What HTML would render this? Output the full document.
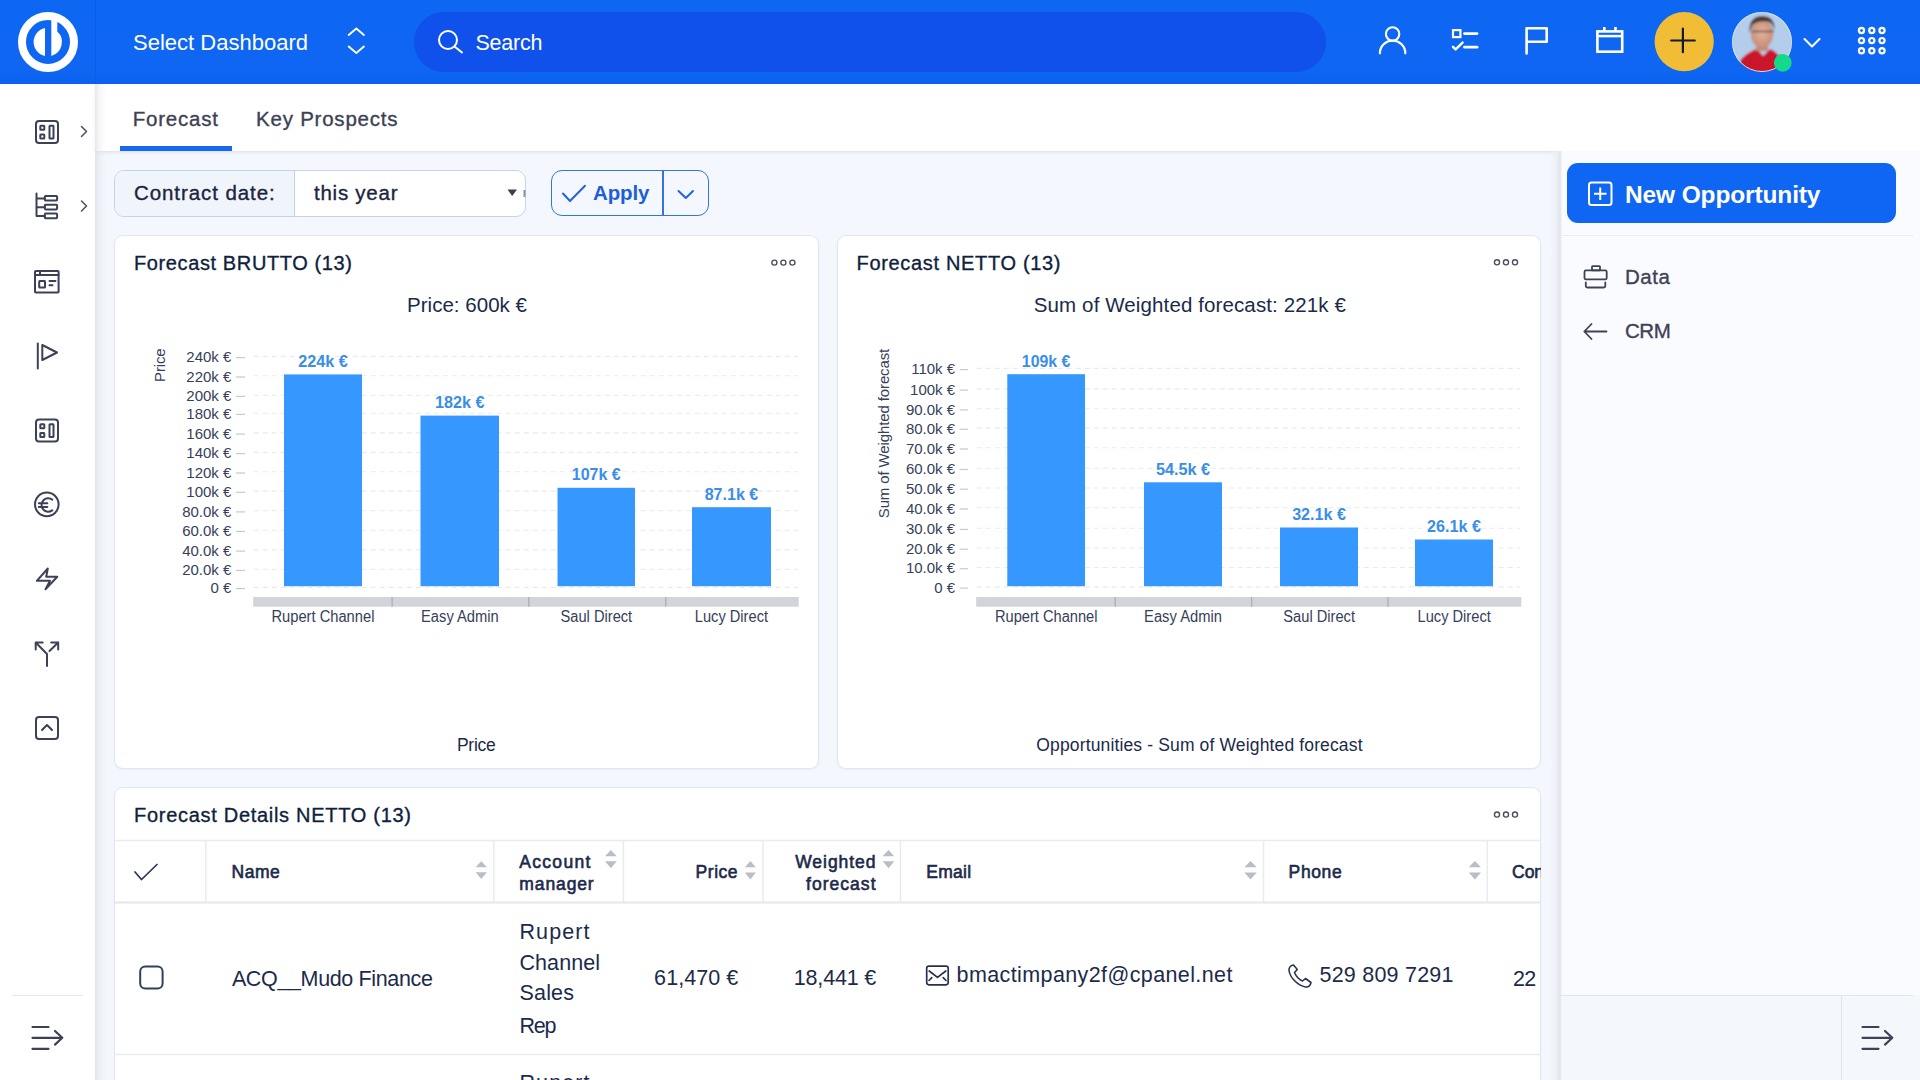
<!DOCTYPE html>
<html><head><meta charset="utf-8">
<style>
html,body{margin:0;padding:0;width:1920px;height:1080px;overflow:hidden;background:#f4f7fd;font-family:"Liberation Sans",sans-serif;}
.a{position:absolute;box-sizing:border-box;}
#hdr{left:0;top:0;width:1920px;height:84px;background:linear-gradient(#0e67f2 0,#0e66f2 70px,#0a62f1 84px);}
#side{left:0;top:84px;width:95px;height:996px;background:#fff;}
#sideline{left:95px;top:84px;width:11px;height:996px;background:linear-gradient(to right,rgba(200,205,212,0.45),rgba(215,220,228,0.25) 40%,rgba(244,247,253,0));}
#tabs{left:95px;top:84px;width:1825px;height:68px;background:#fff;border-bottom:1px solid #e3e7ed;box-shadow:0 1px 3px rgba(40,60,100,0.08);}
#rside{left:1560px;top:151px;width:360px;height:929px;background:#fafbfe;}
#rsideshadow{left:1550px;top:151px;width:12px;height:929px;background:linear-gradient(to right,rgba(244,247,253,0),#eceff5 55%,#e3e6ed 80%,#e6e9ef 90%,#f7fafc);}
#rsidebot{left:1560px;top:995px;width:360px;height:85px;background:#f4f7fc;}
.card{background:#fff;border:1px solid #e2e7ef;border-radius:9px;box-shadow:0 1px 2px rgba(30,50,90,0.05);}
svg{position:absolute;left:0;top:0;}
</style></head>
<body>
<div class="a" id="hdr"></div>
<div class="a" id="side"></div>
<div class="a" id="tabs"></div>
<div class="a" id="rside"></div>
<div class="a" id="rsidebot"></div>
<div class="a" id="rsideshadow"></div>
<div class="a" id="sideline"></div>

<!-- filter -->
<div class="a" style="left:114px;top:169.5px;width:412px;height:47px;border:1px solid #c6d3e7;border-radius:10px;background:#fff;overflow:hidden;">
  <div class="a" style="left:0;top:0;width:180px;height:45px;background:#f0f4fb;border-right:1px solid #c6d3e7;"></div>
</div>
<div class="a" style="left:551px;top:170px;width:158px;height:46px;border:1.6px solid #3474dc;border-radius:11px;background:#f4f7fd;"></div>
<div class="a" style="left:661.5px;top:171px;width:2.5px;height:44px;background:#3474dc;"></div>

<!-- cards -->
<div class="a card" style="left:114px;top:235px;width:705px;height:534px;"></div>
<div class="a card" style="left:837px;top:235px;width:704px;height:534px;"></div>
<div class="a card" style="left:114px;top:787px;width:1427px;height:320px;"></div>

<!-- right sidebar -->
<div class="a" style="left:1567px;top:163px;width:329px;height:60px;background:#0e66f2;border-radius:11px;"></div>
<div class="a" style="left:1560px;top:235px;width:353px;height:1px;background:#e8ecf2;"></div>
<div class="a" style="left:1560px;top:995px;width:353px;height:1px;background:#e1e5ec;"></div>
<div class="a" style="left:1841px;top:996px;width:1px;height:84px;background:#e1e5ec;"></div>
<div class="a" style="left:12px;top:995px;width:71px;height:1px;background:#e6e9ee;"></div>

<svg width="1920" height="1080" viewBox="0 0 1920 1080" font-family="Liberation Sans, sans-serif">
<!-- HEADER -->
<line x1="95.5" y1="0" x2="95.5" y2="84" stroke="#0e5ddf" stroke-width="1"/>
<circle cx="48" cy="42" r="26" fill="none" stroke="#fff" stroke-width="8"/>
<path d="M45 28 A14.3 14.3 0 0 0 45 56 Z" fill="#fff"/>
<path d="M51.3 20 L57.3 21 L57.3 31.6 A14.3 14.3 0 0 1 51.3 55.9 Z" fill="#fff"/>
<text x="133" y="49.7" font-size="22" fill="#fff" textLength="175" lengthAdjust="spacing">Select Dashboard</text>
<path d="M348.7 35 L356.3 28.6 L363.9 35 M348.7 46.6 L356.3 53 L363.9 46.6" fill="none" stroke="#fff" stroke-width="1.9" stroke-linecap="round" stroke-linejoin="round"/>
<rect x="414" y="12" width="912" height="60" rx="30" fill="#1051ec"/>
<circle cx="448" cy="40" r="9" fill="none" stroke="#fff" stroke-width="2"/>
<line x1="454.5" y1="46.5" x2="462" y2="52.5" stroke="#fff" stroke-width="2" stroke-linecap="round"/>
<text x="475.5" y="49.8" font-size="21.5" fill="#fff" textLength="67" lengthAdjust="spacing">Search</text>
<!-- user -->
<circle cx="1392.6" cy="34" r="6.7" fill="none" stroke="#fff" stroke-width="2.1"/>
<path d="M1379.9 53.3 A12.7 12.7 0 0 1 1405.3 53.3" fill="none" stroke="#fff" stroke-width="2.2" stroke-linecap="round"/>
<!-- checklist -->
<rect x="1453" y="30.1" width="7.4" height="7" fill="none" stroke="#fff" stroke-width="2.2"/>
<line x1="1464.5" y1="33.6" x2="1477" y2="33.6" stroke="#fff" stroke-width="2.8" stroke-linecap="round"/>
<line x1="1464.5" y1="47.2" x2="1477" y2="47.2" stroke="#fff" stroke-width="2.8" stroke-linecap="round"/>
<path d="M1453 46.8 L1455.6 49.4 L1462.6 42.6" fill="none" stroke="#fff" stroke-width="2.4" stroke-linecap="round" stroke-linejoin="round"/>
<!-- flag -->
<path d="M1526.6 53.5 V28.2 H1546.7 V41.8 H1526.6" fill="none" stroke="#fff" stroke-width="2.6" stroke-linejoin="round" stroke-linecap="round"/>
<!-- calendar -->
<rect x="1597.4" y="31.4" width="24.8" height="20.3" fill="none" stroke="#fff" stroke-width="2.6"/>
<line x1="1597.4" y1="36.1" x2="1622.2" y2="36.1" stroke="#fff" stroke-width="2.5"/>
<line x1="1604.3" y1="27" x2="1604.3" y2="31.5" stroke="#fff" stroke-width="2.6"/>
<line x1="1615.5" y1="27" x2="1615.5" y2="31.5" stroke="#fff" stroke-width="2.6"/>
<!-- plus -->
<circle cx="1684.2" cy="41.6" r="29.6" fill="#f2bd36"/>
<line x1="1671.2" y1="40.5" x2="1694.8" y2="40.5" stroke="#151a2a" stroke-width="2.2" stroke-linecap="round"/>
<line x1="1682.9" y1="28.5" x2="1682.9" y2="52.2" stroke="#151a2a" stroke-width="2.2" stroke-linecap="round"/>
<!-- avatar -->
<defs>
<clipPath id="av"><circle cx="1762" cy="42" r="30"/></clipPath>
<radialGradient id="face" cx="0.5" cy="0.45" r="0.5"><stop offset="0" stop-color="#e2b49c"/><stop offset="1" stop-color="#c99078"/></radialGradient>
</defs>
<filter id="blr" x="-10%" y="-10%" width="120%" height="120%"><feGaussianBlur stdDeviation="1.1"/></filter>
<g clip-path="url(#av)"><g filter="url(#blr)">
<rect x="1732" y="12" width="60" height="60" fill="#b3cdeb"/>
<path d="M1739 73 L1740 61 C1744 55 1751 51 1757 48.5 L1763 56 L1770 49 C1775 51 1779 55 1781 59 L1787 73 Z" fill="#c9142c"/>
<rect x="1756" y="42" width="12" height="9" fill="#bf8c78"/>
<ellipse cx="1762" cy="34" rx="11.2" ry="14" fill="url(#face)"/>
<path d="M1749.5 33 C1748.5 21 1754 16 1762 16 C1770 16 1775 20 1774.5 30 C1773 25 1771 22 1766 21.5 C1760 21 1753 22 1751.5 27 Z" fill="#4d3b33"/>
<path d="M1752 31.5 H1774" stroke="#6a5650" stroke-width="1.6"/>
</g></g>
<circle cx="1762" cy="42" r="29.5" fill="none" stroke="#d3e2f5" stroke-width="1"/>
<circle cx="1782.8" cy="62.8" r="8.9" fill="#15d98a"/>
<path d="M1804.5 39 L1812 46.5 L1819.5 39" fill="none" stroke="#fff" stroke-width="2" stroke-linecap="round" stroke-linejoin="round"/>
<!-- grid -->
<g fill="none" stroke="#fff" stroke-width="2.2">
<circle cx="1861.5" cy="30.5" r="2.6"/><circle cx="1871.8" cy="30.5" r="2.6"/><circle cx="1882" cy="30.5" r="2.6"/>
<circle cx="1861.5" cy="40.6" r="2.6"/><circle cx="1871.8" cy="40.6" r="2.6"/><circle cx="1882" cy="40.6" r="2.6"/>
<circle cx="1861.5" cy="50.7" r="2.6"/><circle cx="1871.8" cy="50.7" r="2.6"/><circle cx="1882" cy="50.7" r="2.6"/>
</g>

<!-- LEFT SIDEBAR ICONS -->
<g fill="none" stroke="#3d4157" stroke-width="2" stroke-linejoin="round" stroke-linecap="round">
<rect x="36" y="121" width="22" height="22" rx="3"/>
<rect x="40.3" y="125.7" width="4" height="4" rx="0.5"/>
<rect x="40.3" y="134.5" width="4" height="4" rx="0.5"/>
<rect x="49.5" y="125.7" width="4" height="12.8" rx="0.5"/>
<path d="M81.5 126.5 L86.5 131.5 L81.5 136.5" stroke-width="1.5" stroke="#4a4e60"/>
<path d="M36.5 193.5 V216 M36.5 198.4 H44.8 M36.5 207.2 H44.8 M36.5 216 H44.8"/>
<rect x="44.8" y="196" width="12.3" height="4.6" rx="0.8"/>
<rect x="44.8" y="204.8" width="12.3" height="4.6" rx="0.8"/>
<rect x="44.8" y="213.6" width="12.3" height="4.6" rx="0.8"/>
<path d="M81.5 201 L86.5 206 L81.5 211" stroke-width="1.5" stroke="#4a4e60"/>
<rect x="35" y="271" width="23.6" height="21.6" rx="0.8"/>
<line x1="35" y1="275" x2="58.6" y2="275"/>
<line x1="40" y1="271" x2="40" y2="275"/>
<rect x="39.2" y="281" width="5.8" height="6.5" rx="0.5"/>
<line x1="49.5" y1="281" x2="55.5" y2="281"/>
<line x1="49.5" y1="285.3" x2="52.5" y2="285.3"/>
<line x1="37.8" y1="343.5" x2="37.8" y2="368.5"/>
<path d="M42.3 345 L57 352.5 L42.3 360 Z"/>
<rect x="36" y="419.5" width="22" height="22" rx="3"/>
<rect x="40.3" y="424.2" width="4" height="4" rx="0.5"/>
<rect x="40.3" y="433" width="4" height="4" rx="0.5"/>
<rect x="49.5" y="424.2" width="4" height="12.8" rx="0.5"/>
<circle cx="46.8" cy="504.4" r="11.8"/>
<path d="M52.2 499.6 A6.7 6.7 0 1 0 52.2 510.4"/>
<line x1="38.8" y1="503.3" x2="47.3" y2="503.3"/>
<line x1="38.8" y1="507" x2="47.3" y2="507"/>
<path d="M47.8 568.5 L36.8 580.8 L50 580.8 L45.5 589.3 L57.3 576.7 L46.2 576.7 Z"/>
<path d="M47 666 V654 L35.7 642.5 M35.7 649.5 V642.5 H42.7 M49.5 651 L58.2 642.5 M51.2 642.5 H58.2 V649.5"/>
<rect x="36" y="717" width="22" height="22" rx="3"/>
<path d="M42 730 L47 725 L52 730"/>
<path d="M32.5 1027 H48.5 M32.5 1037.8 H62.3 M32.5 1048.8 H48.5 M55 1031 L62.3 1037.8 L55 1044.6" stroke-width="2.2"/>
</g>

<!-- TABS -->
<text x="132.7" y="125.9" font-size="20.5" fill="#3d4154" textLength="85.3" stroke="#3d4154" stroke-width="0.35" lengthAdjust="spacing">Forecast</text>
<text x="256" y="125.9" font-size="20.5" fill="#3d4154" textLength="141.5" stroke="#3d4154" stroke-width="0.35" lengthAdjust="spacing">Key Prospects</text>
<rect x="120" y="146" width="112" height="5" fill="#1766ee"/>

<!-- FILTER -->
<text x="134" y="199.8" font-size="20.5" fill="#1b2540" textLength="140.7" stroke="#1b2540" stroke-width="0.35" lengthAdjust="spacing">Contract date:</text>
<text x="314" y="199.8" font-size="20.5" fill="#1b2540" textLength="83.5" stroke="#1b2540" stroke-width="0.35" lengthAdjust="spacing">this year</text>
<path d="M507.5 189.5 L517 189.5 L512.2 196 Z" fill="#3c3f52"/>
<rect x="523.5" y="190" width="2" height="7" fill="#8e9099"/>
<path d="M563 193.5 L570 201 L585 185.8" fill="none" stroke="#2563d6" stroke-width="2" stroke-linecap="round" stroke-linejoin="round"/>
<text x="593" y="200.3" font-size="20.5" font-weight="700" fill="#1d5fd5" textLength="56.4" lengthAdjust="spacing">Apply</text>
<path d="M678.5 191 L685.8 198 L693 191" fill="none" stroke="#2563d6" stroke-width="2" stroke-linecap="round" stroke-linejoin="round"/>

<!-- CARD TITLES -->
<text x="134" y="269.8" font-size="20" fill="#0f1f3d" textLength="218" stroke="#0f1f3d" stroke-width="0.35" lengthAdjust="spacing">Forecast BRUTTO (13)</text>
<text x="856.5" y="269.8" font-size="20" fill="#0f1f3d" textLength="204" stroke="#0f1f3d" stroke-width="0.35" lengthAdjust="spacing">Forecast NETTO (13)</text>
<text x="134" y="821.7" font-size="20" fill="#0f1f3d" textLength="277" stroke="#0f1f3d" stroke-width="0.35" lengthAdjust="spacing">Forecast Details NETTO (13)</text>
<g fill="none" stroke="#4a4d5c" stroke-width="1.35">
<circle cx="774.4" cy="262.6" r="2.55"/><circle cx="783.4" cy="262.6" r="2.55"/><circle cx="792.4" cy="262.6" r="2.55"/>
<circle cx="1497" cy="262.3" r="2.55"/><circle cx="1506" cy="262.3" r="2.55"/><circle cx="1515" cy="262.3" r="2.55"/>
<circle cx="1497" cy="814.5" r="2.55"/><circle cx="1506" cy="814.5" r="2.55"/><circle cx="1515" cy="814.5" r="2.55"/>
</g>

<!-- CHART 1 -->
<g id="chart1">
<line x1="253.7" y1="587.4" x2="798" y2="587.4" stroke="#eaeaec" stroke-width="1.1" stroke-dasharray="5,4"/>
<line x1="236" y1="588.6" x2="245" y2="588.6" stroke="#c8c9cf" stroke-width="1.2"/>
<text x="231.4" y="593.2" font-size="15" fill="#35405a" text-anchor="end">0 €</text>
<line x1="253.7" y1="569.2" x2="798" y2="569.2" stroke="#eaeaec" stroke-width="1.1" stroke-dasharray="5,4"/>
<line x1="236" y1="570.4" x2="245" y2="570.4" stroke="#c8c9cf" stroke-width="1.2"/>
<text x="231.4" y="575" font-size="15" fill="#35405a" text-anchor="end">20.0k €</text>
<line x1="253.7" y1="549.9" x2="798" y2="549.9" stroke="#eaeaec" stroke-width="1.1" stroke-dasharray="5,4"/>
<line x1="236" y1="551.1" x2="245" y2="551.1" stroke="#c8c9cf" stroke-width="1.2"/>
<text x="231.4" y="555.7" font-size="15" fill="#35405a" text-anchor="end">40.0k €</text>
<line x1="253.7" y1="530.2" x2="798" y2="530.2" stroke="#eaeaec" stroke-width="1.1" stroke-dasharray="5,4"/>
<line x1="236" y1="531.4" x2="245" y2="531.4" stroke="#c8c9cf" stroke-width="1.2"/>
<text x="231.4" y="536" font-size="15" fill="#35405a" text-anchor="end">60.0k €</text>
<line x1="253.7" y1="510.7" x2="798" y2="510.7" stroke="#eaeaec" stroke-width="1.1" stroke-dasharray="5,4"/>
<line x1="236" y1="511.9" x2="245" y2="511.9" stroke="#c8c9cf" stroke-width="1.2"/>
<text x="231.4" y="516.5" font-size="15" fill="#35405a" text-anchor="end">80.0k €</text>
<line x1="253.7" y1="491.1" x2="798" y2="491.1" stroke="#eaeaec" stroke-width="1.1" stroke-dasharray="5,4"/>
<line x1="236" y1="492.3" x2="245" y2="492.3" stroke="#c8c9cf" stroke-width="1.2"/>
<text x="231.4" y="496.9" font-size="15" fill="#35405a" text-anchor="end">100k €</text>
<line x1="253.7" y1="471.8" x2="798" y2="471.8" stroke="#eaeaec" stroke-width="1.1" stroke-dasharray="5,4"/>
<line x1="236" y1="473" x2="245" y2="473" stroke="#c8c9cf" stroke-width="1.2"/>
<text x="231.4" y="477.6" font-size="15" fill="#35405a" text-anchor="end">120k €</text>
<line x1="253.7" y1="452.4" x2="798" y2="452.4" stroke="#eaeaec" stroke-width="1.1" stroke-dasharray="5,4"/>
<line x1="236" y1="453.6" x2="245" y2="453.6" stroke="#c8c9cf" stroke-width="1.2"/>
<text x="231.4" y="458.2" font-size="15" fill="#35405a" text-anchor="end">140k €</text>
<line x1="253.7" y1="432.9" x2="798" y2="432.9" stroke="#eaeaec" stroke-width="1.1" stroke-dasharray="5,4"/>
<line x1="236" y1="434.1" x2="245" y2="434.1" stroke="#c8c9cf" stroke-width="1.2"/>
<text x="231.4" y="438.7" font-size="15" fill="#35405a" text-anchor="end">160k €</text>
<line x1="253.7" y1="413.2" x2="798" y2="413.2" stroke="#eaeaec" stroke-width="1.1" stroke-dasharray="5,4"/>
<line x1="236" y1="414.4" x2="245" y2="414.4" stroke="#c8c9cf" stroke-width="1.2"/>
<text x="231.4" y="419" font-size="15" fill="#35405a" text-anchor="end">180k €</text>
<line x1="253.7" y1="395.2" x2="798" y2="395.2" stroke="#eaeaec" stroke-width="1.1" stroke-dasharray="5,4"/>
<line x1="236" y1="396.4" x2="245" y2="396.4" stroke="#c8c9cf" stroke-width="1.2"/>
<text x="231.4" y="401" font-size="15" fill="#35405a" text-anchor="end">200k €</text>
<line x1="253.7" y1="375.8" x2="798" y2="375.8" stroke="#eaeaec" stroke-width="1.1" stroke-dasharray="5,4"/>
<line x1="236" y1="377" x2="245" y2="377" stroke="#c8c9cf" stroke-width="1.2"/>
<text x="231.4" y="381.6" font-size="15" fill="#35405a" text-anchor="end">220k €</text>
<line x1="253.7" y1="356.4" x2="798" y2="356.4" stroke="#eaeaec" stroke-width="1.1" stroke-dasharray="5,4"/>
<line x1="236" y1="357.6" x2="245" y2="357.6" stroke="#c8c9cf" stroke-width="1.2"/>
<text x="231.4" y="362.2" font-size="15" fill="#35405a" text-anchor="end">240k €</text>
<rect x="284" y="374.4" width="78" height="211.8" fill="#3698fe"/>
<text x="323" y="367" font-size="16.3" font-weight="700" fill="#3a8ee8" text-anchor="middle" textLength="49.6" lengthAdjust="spacingAndGlyphs">224k €</text>
<rect x="420.5" y="415.6" width="78.5" height="170.6" fill="#3698fe"/>
<text x="459.75" y="408.4" font-size="16.3" font-weight="700" fill="#3a8ee8" text-anchor="middle" textLength="49.5" lengthAdjust="spacingAndGlyphs">182k €</text>
<rect x="557.5" y="487.8" width="77.5" height="98.4" fill="#3698fe"/>
<text x="596.25" y="480.3" font-size="16.3" font-weight="700" fill="#3a8ee8" text-anchor="middle" textLength="49" lengthAdjust="spacingAndGlyphs">107k €</text>
<rect x="692" y="507.2" width="79" height="79" fill="#3698fe"/>
<text x="731.5" y="499.5" font-size="16.3" font-weight="700" fill="#3a8ee8" text-anchor="middle" textLength="53.6" lengthAdjust="spacingAndGlyphs">87.1k €</text>
<rect x="253.2" y="597" width="545.5" height="9.7" fill="#d3d4d9"/>
<line x1="392.1" y1="597" x2="392.1" y2="606.7" stroke="#a9aab0" stroke-width="1.2"/>
<line x1="528.8" y1="597" x2="528.8" y2="606.7" stroke="#a9aab0" stroke-width="1.2"/>
<line x1="665.8" y1="597" x2="665.8" y2="606.7" stroke="#a9aab0" stroke-width="1.2"/>
<text x="322.95" y="621.7" font-size="15.6" fill="#35405a" text-anchor="middle" textLength="102.9" lengthAdjust="spacingAndGlyphs">Rupert Channel</text>
<text x="459.9" y="621.7" font-size="15.6" fill="#35405a" text-anchor="middle" textLength="77.8" lengthAdjust="spacingAndGlyphs">Easy Admin</text>
<text x="596.35" y="621.7" font-size="15.6" fill="#35405a" text-anchor="middle" textLength="71.7" lengthAdjust="spacingAndGlyphs">Saul Direct</text>
<text x="731.4" y="621.7" font-size="15.6" fill="#35405a" text-anchor="middle" textLength="73.3" lengthAdjust="spacingAndGlyphs">Lucy Direct</text>
<text x="407" y="311.8" font-size="20.5" fill="#1b2a4a" textLength="120" lengthAdjust="spacing">Price: 600k €</text>
<text x="456.9" y="751.4" font-size="17.5" fill="#1b2a4a" textLength="38.9" lengthAdjust="spacing">Price</text>
<text transform="translate(164.9,365.2) rotate(-90)" x="0" y="0" font-size="15" fill="#35405a" text-anchor="middle" textLength="33.5" lengthAdjust="spacing">Price</text>
</g>
<!-- CHART 2 -->
<g id="chart2">
<line x1="976.7" y1="586.9" x2="1520" y2="586.9" stroke="#eaeaec" stroke-width="1.1" stroke-dasharray="5,4"/>
<line x1="959.7" y1="588.1" x2="968" y2="588.1" stroke="#c8c9cf" stroke-width="1.2"/>
<text x="955.1" y="592.7" font-size="15" fill="#35405a" text-anchor="end">0 €</text>
<line x1="976.7" y1="567.55" x2="1520" y2="567.55" stroke="#eaeaec" stroke-width="1.1" stroke-dasharray="5,4"/>
<line x1="959.7" y1="568.75" x2="968" y2="568.75" stroke="#c8c9cf" stroke-width="1.2"/>
<text x="955.1" y="573.35" font-size="15" fill="#35405a" text-anchor="end">10.0k €</text>
<line x1="976.7" y1="548" x2="1520" y2="548" stroke="#eaeaec" stroke-width="1.1" stroke-dasharray="5,4"/>
<line x1="959.7" y1="549.2" x2="968" y2="549.2" stroke="#c8c9cf" stroke-width="1.2"/>
<text x="955.1" y="553.8" font-size="15" fill="#35405a" text-anchor="end">20.0k €</text>
<line x1="976.7" y1="528.2" x2="1520" y2="528.2" stroke="#eaeaec" stroke-width="1.1" stroke-dasharray="5,4"/>
<line x1="959.7" y1="529.4" x2="968" y2="529.4" stroke="#c8c9cf" stroke-width="1.2"/>
<text x="955.1" y="534" font-size="15" fill="#35405a" text-anchor="end">30.0k €</text>
<line x1="976.7" y1="507.8" x2="1520" y2="507.8" stroke="#eaeaec" stroke-width="1.1" stroke-dasharray="5,4"/>
<line x1="959.7" y1="509" x2="968" y2="509" stroke="#c8c9cf" stroke-width="1.2"/>
<text x="955.1" y="513.6" font-size="15" fill="#35405a" text-anchor="end">40.0k €</text>
<line x1="976.7" y1="488" x2="1520" y2="488" stroke="#eaeaec" stroke-width="1.1" stroke-dasharray="5,4"/>
<line x1="959.7" y1="489.2" x2="968" y2="489.2" stroke="#c8c9cf" stroke-width="1.2"/>
<text x="955.1" y="493.8" font-size="15" fill="#35405a" text-anchor="end">50.0k €</text>
<line x1="976.7" y1="468.3" x2="1520" y2="468.3" stroke="#eaeaec" stroke-width="1.1" stroke-dasharray="5,4"/>
<line x1="959.7" y1="469.5" x2="968" y2="469.5" stroke="#c8c9cf" stroke-width="1.2"/>
<text x="955.1" y="474.1" font-size="15" fill="#35405a" text-anchor="end">60.0k €</text>
<line x1="976.7" y1="447.8" x2="1520" y2="447.8" stroke="#eaeaec" stroke-width="1.1" stroke-dasharray="5,4"/>
<line x1="959.7" y1="449" x2="968" y2="449" stroke="#c8c9cf" stroke-width="1.2"/>
<text x="955.1" y="453.6" font-size="15" fill="#35405a" text-anchor="end">70.0k €</text>
<line x1="976.7" y1="428.1" x2="1520" y2="428.1" stroke="#eaeaec" stroke-width="1.1" stroke-dasharray="5,4"/>
<line x1="959.7" y1="429.3" x2="968" y2="429.3" stroke="#c8c9cf" stroke-width="1.2"/>
<text x="955.1" y="433.9" font-size="15" fill="#35405a" text-anchor="end">80.0k €</text>
<line x1="976.7" y1="408.7" x2="1520" y2="408.7" stroke="#eaeaec" stroke-width="1.1" stroke-dasharray="5,4"/>
<line x1="959.7" y1="409.9" x2="968" y2="409.9" stroke="#c8c9cf" stroke-width="1.2"/>
<text x="955.1" y="414.5" font-size="15" fill="#35405a" text-anchor="end">90.0k €</text>
<line x1="976.7" y1="388.9" x2="1520" y2="388.9" stroke="#eaeaec" stroke-width="1.1" stroke-dasharray="5,4"/>
<line x1="959.7" y1="390.1" x2="968" y2="390.1" stroke="#c8c9cf" stroke-width="1.2"/>
<text x="955.1" y="394.7" font-size="15" fill="#35405a" text-anchor="end">100k €</text>
<line x1="976.7" y1="368.4" x2="1520" y2="368.4" stroke="#eaeaec" stroke-width="1.1" stroke-dasharray="5,4"/>
<line x1="959.7" y1="369.6" x2="968" y2="369.6" stroke="#c8c9cf" stroke-width="1.2"/>
<text x="955.1" y="374.2" font-size="15" fill="#35405a" text-anchor="end">110k €</text>
<rect x="1007.3" y="374.2" width="77.7" height="212" fill="#3698fe"/>
<text x="1046.15" y="367" font-size="16.3" font-weight="700" fill="#3a8ee8" text-anchor="middle" textLength="48.6" lengthAdjust="spacingAndGlyphs">109k €</text>
<rect x="1144" y="482.3" width="78" height="103.9" fill="#3698fe"/>
<text x="1183" y="475.1" font-size="16.3" font-weight="700" fill="#3a8ee8" text-anchor="middle" textLength="54.2" lengthAdjust="spacingAndGlyphs">54.5k €</text>
<rect x="1280" y="527.5" width="78" height="58.7" fill="#3698fe"/>
<text x="1319" y="519.5" font-size="16.3" font-weight="700" fill="#3a8ee8" text-anchor="middle" textLength="53.7" lengthAdjust="spacingAndGlyphs">32.1k €</text>
<rect x="1415" y="539.5" width="78" height="46.7" fill="#3698fe"/>
<text x="1454" y="531.7" font-size="16.3" font-weight="700" fill="#3a8ee8" text-anchor="middle" textLength="53.8" lengthAdjust="spacingAndGlyphs">26.1k €</text>
<rect x="976.2" y="597" width="545.1" height="9.7" fill="#d3d4d9"/>
<line x1="1115.2" y1="597" x2="1115.2" y2="606.7" stroke="#a9aab0" stroke-width="1.2"/>
<line x1="1251.7" y1="597" x2="1251.7" y2="606.7" stroke="#a9aab0" stroke-width="1.2"/>
<line x1="1388" y1="597" x2="1388" y2="606.7" stroke="#a9aab0" stroke-width="1.2"/>
<text x="1046.25" y="621.7" font-size="15.6" fill="#35405a" text-anchor="middle" textLength="102.5" lengthAdjust="spacingAndGlyphs">Rupert Channel</text>
<text x="1183" y="621.7" font-size="15.6" fill="#35405a" text-anchor="middle" textLength="77.8" lengthAdjust="spacingAndGlyphs">Easy Admin</text>
<text x="1319.15" y="621.7" font-size="15.6" fill="#35405a" text-anchor="middle" textLength="71.7" lengthAdjust="spacingAndGlyphs">Saul Direct</text>
<text x="1454.15" y="621.7" font-size="15.6" fill="#35405a" text-anchor="middle" textLength="73.3" lengthAdjust="spacingAndGlyphs">Lucy Direct</text>
<text x="1033.8" y="311.6" font-size="20.5" fill="#1b2a4a" textLength="312" lengthAdjust="spacing">Sum of Weighted forecast: 221k €</text>
<text x="1036.3" y="751.4" font-size="17.5" fill="#1b2a4a" textLength="326.2" lengthAdjust="spacing">Opportunities - Sum of Weighted forecast</text>
<text transform="translate(888.7,433.5) rotate(-90)" x="0" y="0" font-size="15" fill="#35405a" text-anchor="middle" textLength="169.5" lengthAdjust="spacing">Sum of Weighted forecast</text>
</g>

<!-- RIGHT SIDEBAR -->
<rect x="1589" y="182.5" width="22.5" height="22.5" rx="2.5" fill="none" stroke="#fff" stroke-width="2"/>
<path d="M1600.2 187.5 V200 M1594 193.7 H1606.5" stroke="#fff" stroke-width="2"/>
<text x="1625" y="202.6" font-size="24.5" font-weight="700" fill="#fff" textLength="195.5" lengthAdjust="spacing">New Opportunity</text>
<g fill="none" stroke="#3e4257" stroke-width="1.8" stroke-linejoin="round" stroke-linecap="round">
<rect x="1592" y="266.2" width="8" height="4.2" rx="0.6"/>
<rect x="1584.5" y="270.4" width="22.2" height="9" rx="1.5"/>
<path d="M1585.8 282.5 V286 Q1585.8 287.5 1587.3 287.5 H1603.8 Q1605.3 287.5 1605.3 286 V282.5"/>
<path d="M1606.5 331.5 H1585 M1591.5 324 L1584.3 331.5 L1591.5 339"/>
</g>
<text x="1625" y="284.1" font-size="20.5" fill="#3e4257" textLength="44.8" stroke="#3e4257" stroke-width="0.35" lengthAdjust="spacing">Data</text>
<text x="1625" y="338" font-size="20.5" fill="#3e4257" textLength="45.8" stroke="#3e4257" stroke-width="0.35" lengthAdjust="spacing">CRM</text>
<path d="M1862.5 1027 H1878.5 M1862.5 1037.8 H1892.3 M1862.5 1048.8 H1878.5 M1885 1031 L1892.3 1037.8 L1885 1044.6" fill="none" stroke="#3e4257" stroke-width="2.2" stroke-linecap="round" stroke-linejoin="round"/>

<!-- TABLE -->
<g id="table">
<line x1="114" y1="840.5" x2="1541" y2="840.5" stroke="#e8ebf0" stroke-width="1.5"/>
<line x1="114" y1="902.5" x2="1541" y2="902.5" stroke="#e4e8ee" stroke-width="2"/>
<line x1="114" y1="1054.5" x2="1541" y2="1054.5" stroke="#e8ebf0" stroke-width="1.5"/>
<line x1="205.8" y1="841" x2="205.8" y2="902" stroke="#e8ebf0" stroke-width="1.5"/>
<line x1="493.8" y1="841" x2="493.8" y2="902" stroke="#e8ebf0" stroke-width="1.5"/>
<line x1="623.4" y1="841" x2="623.4" y2="902" stroke="#e8ebf0" stroke-width="1.5"/>
<line x1="763" y1="841" x2="763" y2="902" stroke="#e8ebf0" stroke-width="1.5"/>
<line x1="900.4" y1="841" x2="900.4" y2="902" stroke="#e8ebf0" stroke-width="1.5"/>
<line x1="1263.5" y1="841" x2="1263.5" y2="902" stroke="#e8ebf0" stroke-width="1.5"/>
<line x1="1487.2" y1="841" x2="1487.2" y2="902" stroke="#e8ebf0" stroke-width="1.5"/>
<path d="M135 872 L141.5 879.5 L157 864.5" fill="none" stroke="#2a3550" stroke-width="1.7" stroke-linecap="round" stroke-linejoin="round"/>
<text x="231.5" y="877.9" font-size="17.5" font-weight="400" fill="#1c2a4b" stroke="#1c2a4b" stroke-width="0.6" textLength="48.3" lengthAdjust="spacing">Name</text>
<text x="519.3" y="867.6" font-size="17.5" font-weight="400" fill="#1c2a4b" stroke="#1c2a4b" stroke-width="0.6" textLength="71" lengthAdjust="spacing">Account</text>
<text x="519.3" y="889.6" font-size="17.5" font-weight="400" fill="#1c2a4b" stroke="#1c2a4b" stroke-width="0.6" textLength="74.4" lengthAdjust="spacing">manager</text>
<text x="695.6" y="878.3" font-size="17.5" font-weight="400" fill="#1c2a4b" stroke="#1c2a4b" stroke-width="0.6" textLength="42" lengthAdjust="spacing">Price</text>
<text x="795.2" y="867.6" font-size="17.5" font-weight="400" fill="#1c2a4b" stroke="#1c2a4b" stroke-width="0.6" textLength="80.3" lengthAdjust="spacing">Weighted</text>
<text x="806" y="889.6" font-size="17.5" font-weight="400" fill="#1c2a4b" stroke="#1c2a4b" stroke-width="0.6" textLength="69.5" lengthAdjust="spacing">forecast</text>
<text x="926.2" y="878" font-size="17.5" font-weight="400" fill="#1c2a4b" stroke="#1c2a4b" stroke-width="0.6" textLength="45" lengthAdjust="spacing">Email</text>
<text x="1288.6" y="878" font-size="17.5" font-weight="400" fill="#1c2a4b" stroke="#1c2a4b" stroke-width="0.6" textLength="53.1" lengthAdjust="spacing">Phone</text>
<svg x="1500" y="840" width="41" height="62" overflow="hidden"><text x="12" y="38" font-size="17.5" fill="#1c2a4b" stroke="#1c2a4b" stroke-width="0.6">Con</text></svg>
<path d="M475.6 867.25 L481.3 861.2 L487 867.25 Z M475.6 872.24 L481.3 879 L487 872.24 Z" fill="#b9bdc6"/>
<path d="M605 856.25 L610.85 850.1 L616.7 856.25 Z M605 861.32 L610.85 868.2 L616.7 861.32 Z" fill="#b9bdc6"/>
<path d="M744.9 867.29 L750.35 861 L755.8 867.29 Z M744.9 872.47 L750.35 879.5 L755.8 872.47 Z" fill="#b9bdc6"/>
<path d="M882.7 856.25 L888.5 850.1 L894.3 856.25 Z M882.7 861.32 L888.5 868.2 L894.3 861.32 Z" fill="#b9bdc6"/>
<path d="M1244.3 867.29 L1250.5 861 L1256.7 867.29 Z M1244.3 872.47 L1250.5 879.5 L1256.7 872.47 Z" fill="#b9bdc6"/>
<path d="M1468.7 867.29 L1474.85 861 L1481 867.29 Z M1468.7 872.47 L1474.85 879.5 L1481 872.47 Z" fill="#b9bdc6"/>
<rect x="140.2" y="966.5" width="22.4" height="22" rx="5" fill="none" stroke="#33405a" stroke-width="2"/>
<text x="231.9" y="986.1" font-size="21.5" fill="#1c2a4b" textLength="201" lengthAdjust="spacing">ACQ__Mudo Finance</text>
<text x="519.5" y="938.7" font-size="21.5" fill="#1c2a4b" textLength="70" lengthAdjust="spacing">Rupert</text>
<text x="519.5" y="969.9" font-size="21.5" fill="#1c2a4b" textLength="80.5" lengthAdjust="spacing">Channel</text>
<text x="519.5" y="1000.2" font-size="21.5" fill="#1c2a4b" textLength="54.5" lengthAdjust="spacing">Sales</text>
<text x="519.5" y="1033.3" font-size="21.5" fill="#1c2a4b" textLength="37" lengthAdjust="spacing">Rep</text>
<text x="654.1" y="985.3" font-size="21.5" fill="#1c2a4b" textLength="84.2" lengthAdjust="spacing">61,470 €</text>
<text x="793.8" y="985.3" font-size="21.5" fill="#1c2a4b" textLength="82.4" lengthAdjust="spacing">18,441 €</text>
<text x="956.6" y="982" font-size="21.5" fill="#1c2a4b" textLength="275.8" lengthAdjust="spacing">bmactimpany2f@cpanel.net</text>
<text x="1319.5" y="982" font-size="21.5" fill="#1c2a4b" textLength="134" lengthAdjust="spacing">529 809 7291</text>
<text x="1513" y="985.5" font-size="21.5" fill="#1c2a4b" textLength="23.2" lengthAdjust="spacing">22</text>
<text x="519.5" y="1090.3" font-size="21.5" fill="#1c2a4b" textLength="70" lengthAdjust="spacing">Rupert</text>
<g fill="none" stroke="#26324d" stroke-width="1.7" stroke-linejoin="round" stroke-linecap="round"><rect x="926.7" y="966.1" width="21.5" height="18.7" rx="2.2"/><path d="M929.2 971 L937.5 977.4 L945.8 971 M929 980.5 L931.8 977.7 M943.2 977.7 L946 980.5"/></g>
<path d="M1293.5 965 C1291 965.5 1288.8 967.5 1289 970.5 C1290 977.5 1297.5 985.5 1305.5 987 C1308.5 987.3 1310.5 985 1311 982.5 L1305.5 978.5 L1302.5 981 C1299 979.5 1296 976 1294.5 972.5 L1297.3 969.5 Z" fill="none" stroke="#26324d" stroke-width="1.55" stroke-linejoin="round"/>
</g>
</svg>
</body></html>
